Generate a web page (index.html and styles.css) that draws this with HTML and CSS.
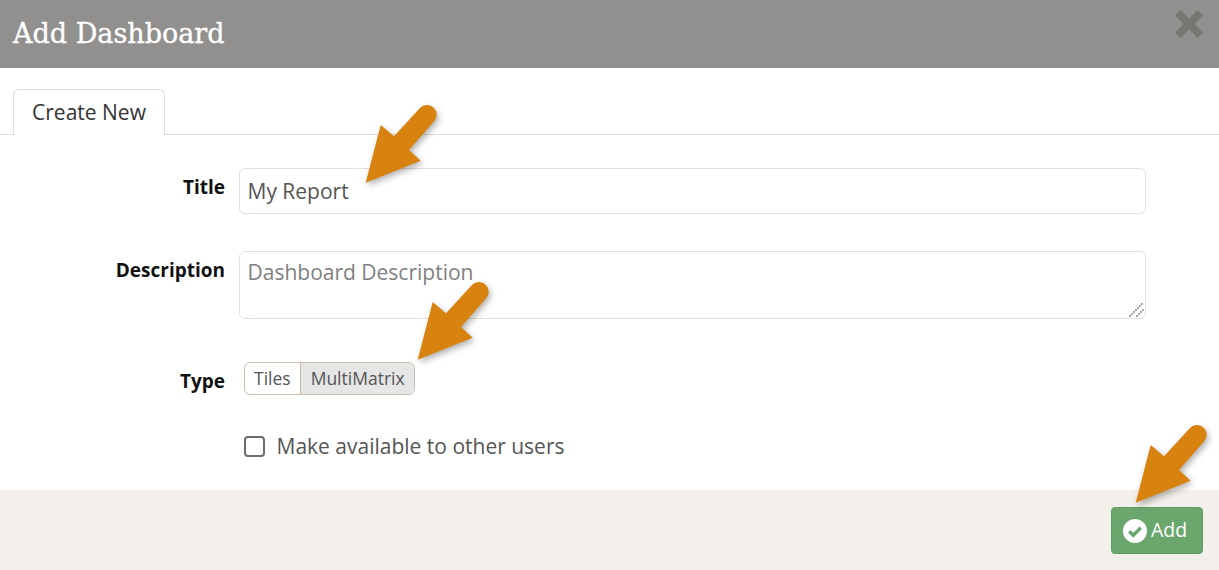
FILE: index.html
```html
<!DOCTYPE html>
<html lang="en">
<head>
<meta charset="utf-8">
<title>Add Dashboard</title>
<link rel="stylesheet" href="styles.css">
</head>
<body>
<div class="modal">
  <header class="modal-header">
    <h1 class="modal-title">Add Dashboard</h1>
    <svg class="close-icon" viewBox="0 0 28 28" aria-hidden="true"><path d="M0 5.500 5.500 0 14 8.500 22.500 0 28 5.500 19.500 14 28 22.500 22.500 28 14 19.500 5.500 28 0 22.500 8.500 14z"/></svg>
  </header>
  <div class="tabs"><div class="tab">Create New</div></div>
  <form class="form">
    <label class="label label-title">Title</label>
    <input class="control input" type="text" value="My Report">
    <label class="label label-desc">Description</label>
    <div class="textarea-wrap">
      <textarea class="control textarea" placeholder="Dashboard Description"></textarea>
      <svg class="resize-grip" viewBox="0 0 15 15" aria-hidden="true"><path d="M.5 14.500 14.500.5M7.500 14.500l7-7" fill="none" stroke="#3a3a3a" stroke-width="1.200" stroke-dasharray="1.410 1.410"/></svg>
    </div>
    <label class="label label-type">Type</label>
    <div class="toggle"><span class="toggle-item">Tiles</span><span class="toggle-item is-active">MultiMatrix</span></div>
    <div class="check-row"><span class="checkbox"></span><span class="check-label">Make available to other users</span></div>
  </form>
  <footer class="modal-footer">
    <button class="add-btn" type="button">
      <svg class="add-icon" viewBox="0 0 24 24" aria-hidden="true"><circle cx="12" cy="12" r="12" fill="#fff"/><path d="M6.300 12.400l3.900 3.900 7.600-7.600" fill="none" stroke="#6ba76d" stroke-width="3.400"/></svg>
      <span class="add-text">Add</span>
    </button>
  </footer>
  <svg class="arrow arrow-title" viewBox="0 0 90 90" aria-hidden="true"><use href="#arrow-shape"/></svg>
  <svg class="arrow arrow-type" viewBox="0 0 90 90" aria-hidden="true"><use href="#arrow-shape"/></svg>
  <svg class="arrow arrow-add" viewBox="0 0 90 90" aria-hidden="true"><use href="#arrow-shape"/></svg>
</div>
<svg class="defs" aria-hidden="true"><defs>
  <g id="arrow-shape">
    <path d="M5.700 82.700 20.700 25 34 36.200 60 8a9.500 9.500 0 0 1 14 13.400L49 50 60.700 60.700z" fill="#d8820f"/>
  </g>
</defs></svg>
</body>
</html>
```
FILE: styles.css
```css
* { box-sizing: border-box; }
html, body { margin: 0; height: 100%; background: #fff; }
body { font-family: "Open Sans", "Noto Sans", sans-serif; color: #444; overflow: hidden; }
.modal { position: relative; width: 1219px; height: 570px; display: flex; flex-direction: column; }
.modal-header { height: 68px; flex: none; background: #92908e; display: flex; align-items: center; justify-content: space-between; padding: 0 16px 0 13px; }
.modal-title { margin: 0 0 2px; font-family: "DejaVu Serif", serif; font-weight: 400; font-size: 27px; color: #fff; -webkit-text-stroke: .35px #fff; }
.close-icon { width: 28px; height: 28px; fill: #787673; margin-top: -20px; }
.tabs { height: 67px; flex: none; padding: 21px 0 0 13px; border-bottom: 1px solid #e2ddd8; }
.tab { width: 152px; height: 46px; border: 1px solid #e2ddd8; border-bottom: 0; border-radius: 6px 6px 0 0; background: #fff; color: #333; font-size: 21px; text-align: center; line-height: 45px; }
.form { flex: 1; display: grid; grid-template-columns: 225px 907px; column-gap: 14px; align-content: start; padding-top: 33px; }
.label { justify-self: end; font-weight: 700; font-size: 19px; color: #111; line-height: 24px; margin-top: 7px; }
.control { width: 907px; border: 1px solid #e4dfd8; border-radius: 6px; font-family: inherit; font-size: 21px; color: #555; padding: 0 7.500px; background: #fff; outline: 0; }
.input { height: 46px; margin-bottom: 37px; }
.textarea-wrap { position: relative; height: 68px; margin-bottom: 43px; }
.textarea { display: block; height: 68px; padding-top: 5px; line-height: 30px; resize: none; }
.textarea::placeholder { color: #808080; opacity: 1; }
.resize-grip { position: absolute; right: 2px; bottom: 2px; width: 15px; height: 15px; }
.toggle { display: flex; width: 171px; height: 33px; margin-left: 5px; border: 1px solid #cdbfae; border-radius: 6px; overflow: hidden; font-size: 17.500px; line-height: 31px; color: #555; }
.toggle-item { padding: 0 9px; }
.is-active { flex: 1; padding: 0 10px; background: #e6e6e6; border-left: 1px solid #c8b9a6; }
.check-row { grid-column: 2; display: flex; align-items: center; margin: 41px 0 0 5px; height: 20px; }
.checkbox { width: 21px; height: 21px; border: 2px solid #6d6d6d; border-radius: 4px; background: #fff; }
.check-label { margin-left: 11.500px; font-size: 21px; color: #555; }
.modal-footer { height: 80px; flex: none; background: #f3efea; display: flex; justify-content: flex-end; align-items: flex-start; padding: 17px 16px 0 0; }
.add-btn { width: 92px; height: 47px; display: flex; align-items: center; gap: 4px; padding: 0 0 0 11px; border: 1px solid #619c63; border-radius: 4px; background: #6ba76d; color: #fff; font-family: inherit; font-size: 19.500px; }
.add-icon { width: 24px; height: 24px; flex: none; }
.add-text { margin-top: -2px; }
.arrow { position: absolute; width: 90px; height: 90px; overflow: visible; filter: drop-shadow(2px 3px 3px rgba(0,0,0,.3)); }
.arrow-title { left: 360px; top: 100px; }
.arrow-type { left: 411.600px; top: 277.300px; }
.arrow-add { left: 1129.600px; top: 420.300px; }
.defs { position: absolute; width: 0; height: 0; }
```
